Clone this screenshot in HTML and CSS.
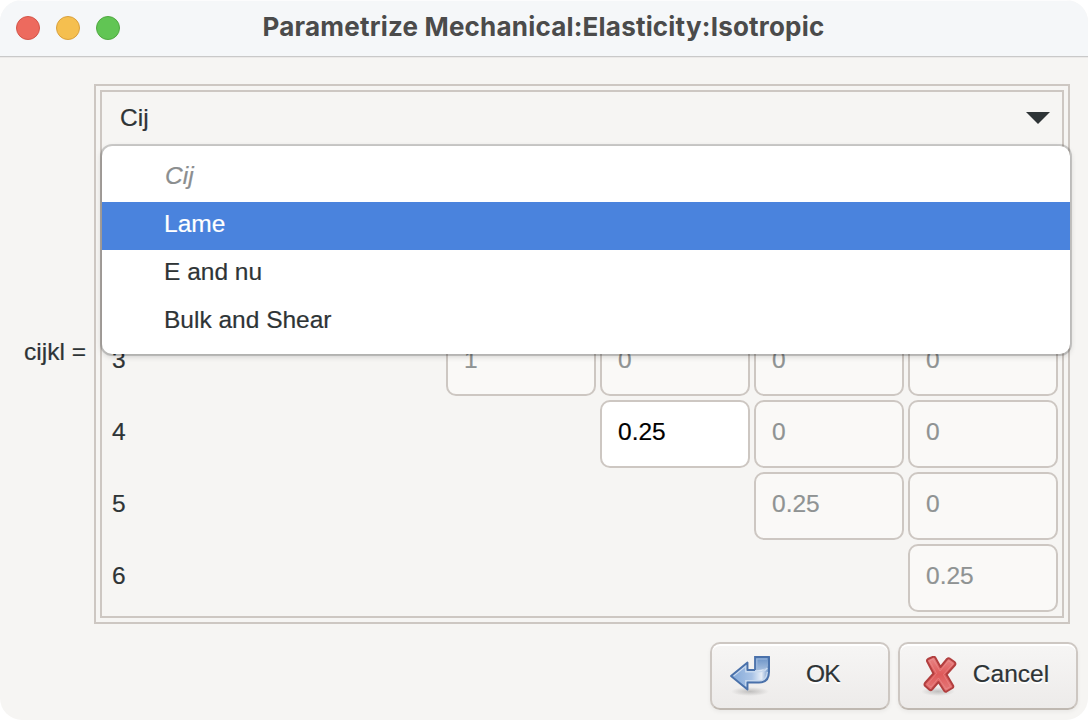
FILE: index.html
```html
<!DOCTYPE html>
<html lang="en">
<head>
<meta charset="utf-8">
<title>Parametrize Mechanical:Elasticity:Isotropic</title>
<link rel="stylesheet" href="styles.css">
</head>
<body>
<div class="window">
  <header class="titlebar">
    <div class="lights">
      <span class="light light-close"></span>
      <span class="light light-minimize"></span>
      <span class="light light-zoom"></span>
    </div>
    <h1 class="title">Parametrize Mechanical:Elasticity:Isotropic</h1>
  </header>

  <main class="content">
    <span class="param-label">cijkl =</span>
    <section class="frame">
      <div class="frame-inner">
        <div class="combo">
          <span>Cij</span>
          <svg class="combo-arrow" width="24" height="12" viewBox="0 0 24 12"><path d="M0 0H24L12 12Z" fill="#2e3436"/></svg>
          <ul class="popup">
            <li class="option option-current">Cij</li>
            <li class="option option-active">Lame</li>
            <li class="option">E and nu</li>
            <li class="option">Bulk and Shear</li>
          </ul>
        </div>
        <div class="matrix">
          <span class="row-label">3</span>
          <span class="cell col-3">1</span><span class="cell">0</span><span class="cell">0</span><span class="cell">0</span>
          <span class="row-label">4</span>
          <span class="cell cell-editable col-4">0.25</span><span class="cell">0</span><span class="cell">0</span>
          <span class="row-label">5</span>
          <span class="cell col-5">0.25</span><span class="cell">0</span>
          <span class="row-label">6</span>
          <span class="cell col-6">0.25</span>
        </div>
      </div>
    </section>
  </main>

  <footer class="actions">
    <button class="button button-ok">
      <svg width="40" height="40" viewBox="0 0 40 40">
        <defs>
          <linearGradient id="arrow" x1="0" x2="1"><stop offset="0" stop-color="#82a8d8"/><stop offset=".55" stop-color="#a9c3e6"/><stop offset=".8" stop-color="#e6edf7"/><stop offset="1" stop-color="#6c93c8"/></linearGradient>
          <linearGradient id="curl" x1="0" x2="0" y1="0" y2="1"><stop offset="0" stop-color="#6890c5"/><stop offset="1" stop-color="#a9c1e0"/></linearGradient>
          <radialGradient id="shade"><stop offset="0" stop-color="#000" stop-opacity=".2"/><stop offset="1" stop-color="#000" stop-opacity="0"/></radialGradient>
        </defs>
        <ellipse cx="20" cy="35.500" rx="19" ry="4.500" fill="url(#shade)"/>
        <path d="M25 1H39V13L33 15H25Z" fill="url(#curl)" stroke="#4a71aa" stroke-width="1.800"/>
        <path d="M26.800 13V3H37" fill="none" stroke="#9db9de" stroke-width="1.200"/>
        <path d="M1 20L17.500 6.500V14H28C33 14 37 12 39 8V16C39 23 35 26.500 29 26.500H17.500V33.500Z" fill="url(#arrow)"/>
        <path d="M3.500 20L15.800 10V15.800H28C33 15.800 36 14 37.300 12M15.800 30V24.800H29C34 24.800 37 21 37.300 16" fill="none" stroke="#c8d9ee" stroke-width="1.400"/>
        <path d="M39 1V16C39 23 35 26.500 29 26.500H17.500V33.500L1 20L17.500 6.500V14H25" fill="none" stroke="#4a71aa" stroke-width="1.900" stroke-linejoin="round"/>
      </svg>
      <span class="button-text">OK</span>
    </button>
    <button class="button button-cancel">
      <svg width="40" height="40" viewBox="0 0 40 40">
        <defs>
          <linearGradient id="cross" x1="0" x2="0" y1="0" y2="1"><stop offset="0" stop-color="#e88787"/><stop offset=".5" stop-color="#df5a5a"/><stop offset="1" stop-color="#e47a7a"/></linearGradient>
        </defs>
        <ellipse cx="18" cy="35.500" rx="17" ry="4.500" fill="url(#shade)"/>
        <path d="M8 3L13 .8Q14.500 .3 15.500 2L20.500 11L27 3Q28.500 1.500 30 2.800L34.500 6Q36 7.300 35 9L26.500 18.500L33 29.500Q33.800 31 32.500 32L26.500 35.500Q25 36.300 24 34.500L18.500 26L12 33.500Q10.800 34.700 9.500 33.700L5 29.800Q4 28.500 5 27L13.500 17.500L7.200 5.500Q6.500 4 8 3Z" fill="url(#cross)" stroke="#b23f3f" stroke-width="2" stroke-linejoin="round"/>
        <path d="M9.500 5L13 3L20 15L28.500 4.800L32.800 8L23.500 18.500L30.500 30.500L26 33L18.500 22L11 31L7.300 28.500L16.500 17.500Z" fill="none" stroke="#f0a0a0" stroke-opacity=".4"/>
      </svg>
      <span class="button-text">Cancel</span>
    </button>
  </footer>
</div>
</body>
</html>
```

FILE: styles.css
```css
* { box-sizing: border-box; }

body {
  margin: 0;
  background: #fff;
  font-family: "Liberation Sans", Arial, sans-serif;
  font-size: 24.5px;
  line-height: 28px;
  color: #2e3436;
  -webkit-text-stroke: 0.2px;
}

.window {
  display: flex;
  flex-direction: column;
  width: 1088px;
  height: 720px;
  overflow: hidden;
  border-radius: 22px;
  background: #f6f5f3;
}

.titlebar {
  display: grid;
  grid-template-columns: 108px 1fr 108px;
  align-items: center;
  height: 58px;
  padding: 0 16px;
  background: #f5f7f9;
  border-bottom: 1px solid #ebe9e8;
  box-shadow: inset 0 1px #fcfcfd, inset 0 -1px #c9c9c9;
}

.lights { display: flex; gap: 16px; padding-bottom: 1px; }
.light { width: 24px; height: 24px; border-radius: 50%; border: 1px solid; }
.light-close { background: #ed6a5e; border-color: #d35549; }
.light-minimize { background: #f5bf4f; border-color: #d9a03d; }
.light-zoom { background: #61c554; border-color: #50a841; }

.title {
  margin: 0;
  padding: 0 1px 3px 0;
  font: 700 26px/32px Inter, "Liberation Sans", sans-serif;
  letter-spacing: 0.2px;
  text-align: center;
  white-space: nowrap;
  color: #4b4b4b;
  -webkit-text-stroke: 0;
}

.content {
  display: flex;
  align-items: center;
  justify-content: flex-end;
  gap: 8px;
  height: 540px;
  margin-top: 26px;
  padding-right: 18px;
}

.param-label { padding-bottom: 4px; white-space: nowrap; }

.frame {
  width: 976px;
  height: 540px;
  padding: 4px;
  border: 2px solid #cdc7c2;
}

.frame-inner {
  display: flex;
  flex-direction: column;
  justify-content: space-between;
  height: 100%;
  padding-bottom: 4px;
  border: 2px solid #cdc7c2;
}

.combo {
  position: relative;
  display: flex;
  align-items: center;
  justify-content: space-between;
  height: 54px;
  padding: 0 12px 2px 18px;
}

.popup {
  position: absolute;
  z-index: 2;
  top: 54px;
  left: 0;
  width: 968px;
  height: 208px;
  margin: 0;
  padding: 8px 0;
  list-style: none;
  background: #fff;
  border-radius: 10px;
  box-shadow: 0 0 0 2px rgba(0, 0, 0, 0.16), 0 2px 6px rgba(0, 0, 0, 0.2);
}

.option { height: 48px; padding: 8px 62px; }
.option-current { padding-left: 63px; font-style: italic; color: #8b8e8f; }
.option-active { background: #4a83dd; color: #fff; }

.matrix {
  display: grid;
  grid-template-columns: 330px repeat(4, 150px);
  grid-auto-rows: 68px;
  gap: 4px;
  padding-left: 10px;
}

.row-label { grid-column: 1; align-self: center; padding-bottom: 4px; }

.cell {
  display: flex;
  align-items: center;
  padding: 0 15px 4px 16px;
  border: 2px solid #cdc7c2;
  border-radius: 10px;
  background: #faf9f7;
  color: #8f9393;
}

.cell-editable { background: #fff; color: #000; }
.col-3 { grid-column: 2; }
.col-4 { grid-column: 3; }
.col-5 { grid-column: 4; }
.col-6 { grid-column: 5; }

.actions {
  display: flex;
  justify-content: flex-end;
  gap: 8px;
  margin-top: 18px;
  padding-right: 10px;
}

.button {
  display: flex;
  align-items: center;
  width: 180px;
  height: 68px;
  padding: 0 18px;
  border: 2px solid #cdc7c2;
  border-bottom-color: #bfb8b1;
  border-radius: 10px;
  background: linear-gradient(#f6f5f4 5%, #edebea);
  box-shadow: inset 0 2px #fff, 0 2px 4px rgba(0, 0, 0, 0.05);
  font: inherit;
  color: #2e3436;
  text-shadow: 0 2px #fff;
}

.button svg { flex: none; }
.button-text { flex: 1; padding: 0 0 4px 6px; text-align: center; }
.button-ok .button-text { letter-spacing: -0.8px; }
.button-cancel { padding-left: 20px; }
.button-cancel .button-text { padding-left: 4px; }
```
